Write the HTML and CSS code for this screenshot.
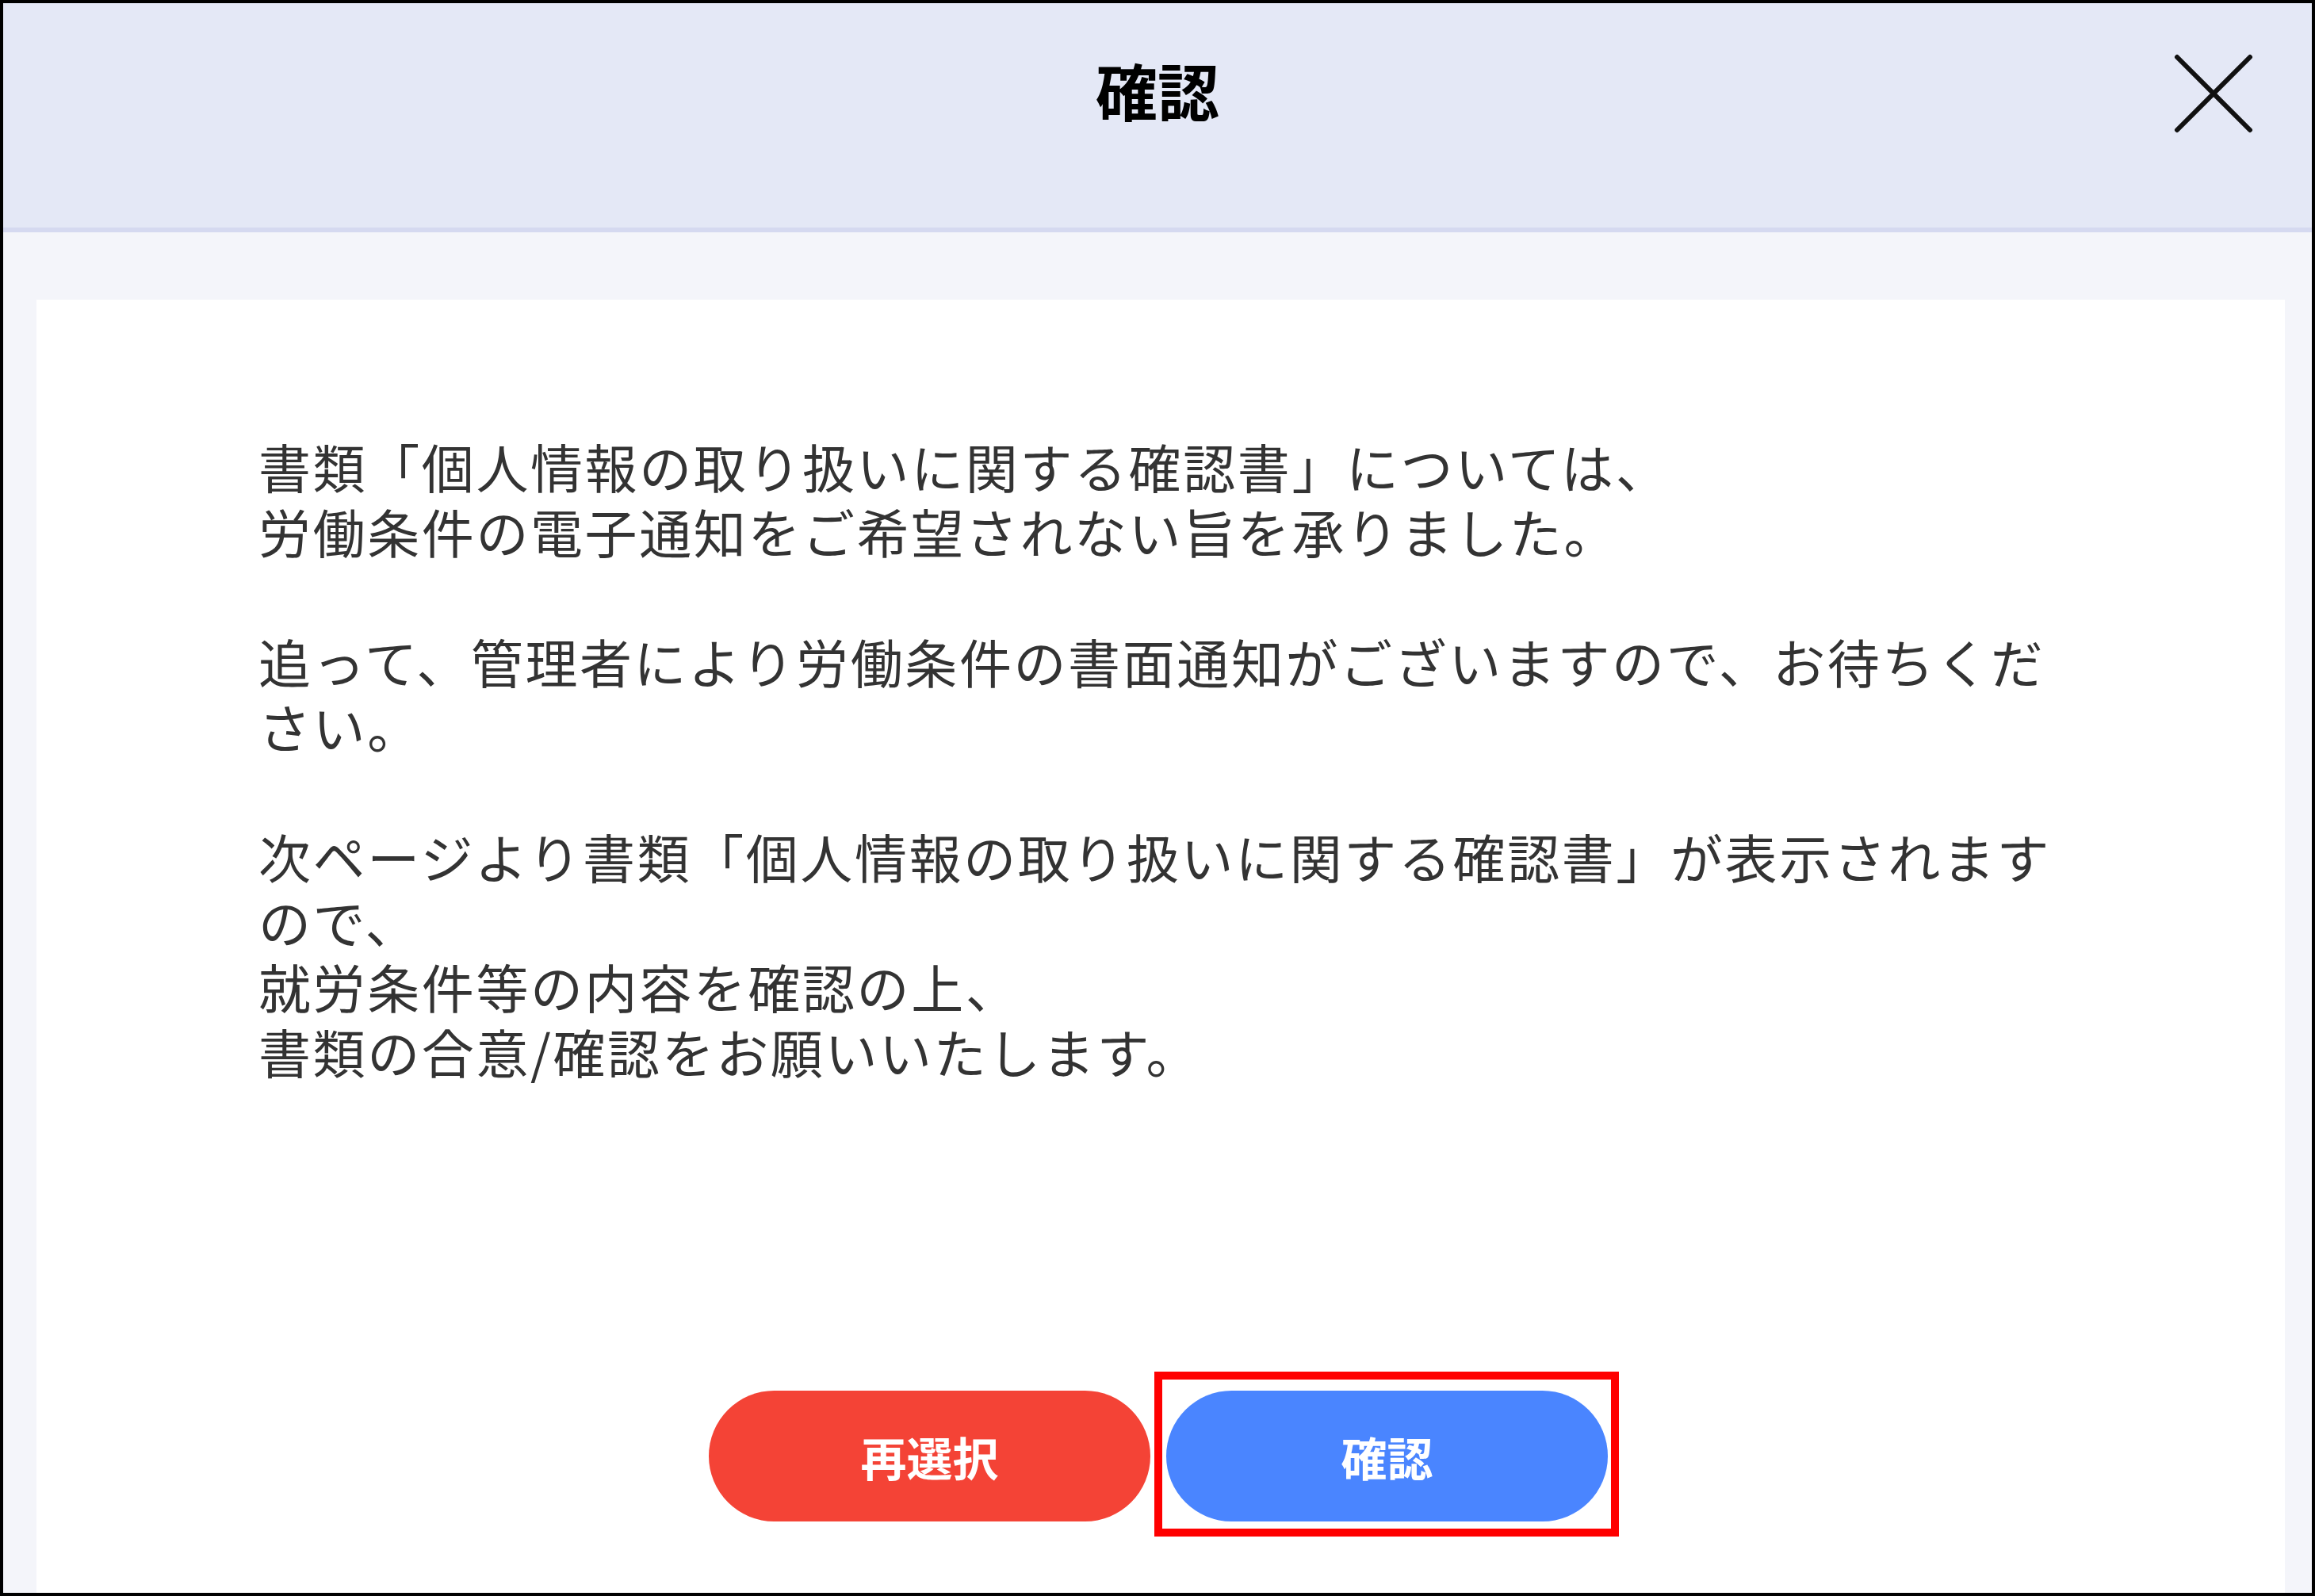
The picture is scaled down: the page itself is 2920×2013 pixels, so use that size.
FILE: index.html
```html
<!DOCTYPE html>
<html lang="ja">

<head>
    <meta charset="UTF-8">
    <meta name="viewport" content="width=device-width, initial-scale=1.0">
    <title>確認</title>
    <link rel="stylesheet" href="styles.css">
</head>

<body>
    <div class="dialog">
        <div class="dialog-header">
            <span></span>
            <h1 class="dialog-title">確認</h1>
            <button class="close-btn" aria-label="閉じる">
                <svg xmlns="http://www.w3.org/2000/svg" width="100" height="100" viewBox="0 0 100 100">
                    <path d="M4 4L96 96M96 4L4 96" stroke="#111" stroke-width="6" stroke-linecap="round" fill="none" />
                </svg>
            </button>
        </div>

        <div class="dialog-body">
            <div class="dialog-panel">
                <div class="message">
                    <p>書類「個人情報の取り扱いに関する確認書」については、<br>労働条件の電子通知をご希望されない旨を承りました。</p>
                    <p>追って、管理者により労働条件の書面通知がございますので、お待ちくだ<br>さい。</p>
                    <p>次ページより書類「個人情報の取り扱いに関する確認書」が表示されます<br>ので、<br>就労条件等の内容を確認の上、<br>書類の合意/確認をお願いいたします。</p>
                </div>

                <div class="actions">
                    <button class="btn btn-red">再選択</button>
                    <div class="btn-wrap">
                        <button class="btn btn-blue">確認</button>
                        <span class="highlight"></span>
                    </div>
                </div>
            </div>
        </div>
    </div>
</body>

</html>
```

FILE: styles.css
```css
* {
    margin: 0;
    padding: 0;
    box-sizing: border-box;
    font-family: "Noto Sans CJK JP", "Noto Sans", sans-serif;
}

body {
    background: #fff;
}

.dialog {
    height: 100vh;
    border: 4px solid #000;
    display: flex;
    flex-direction: column;
}

.dialog-header {
    height: 289px;
    background-color: #e4e8f6;
    border-bottom: 6px solid #d5d9f0;
    display: grid;
    grid-template-columns: 1fr auto 1fr;
    align-items: start;
    padding: 64px 74px 0;
}

.dialog-title {
    font-size: 78px;
    line-height: 78px;
    font-weight: bold;
    color: #000;
    margin-top: 6px;
}

.close-btn {
    justify-self: end;
    background: none;
    border: none;
    width: 100px;
    height: 100px;
    cursor: pointer;
}

.close-btn svg {
    display: block;
}

.dialog-body {
    flex: 1;
    background-color: #f4f5fa;
    padding: 85px 34px 0 42px;
    display: flex;
}

.dialog-panel {
    flex: 1;
    background-color: #fff;
    padding-top: 168px;
}

.message {
    padding-left: 280px;
    color: #333;
    font-size: 66px;
    line-height: 82px;
    letter-spacing: 2.6px;
    white-space: nowrap;
}

.message p {
    margin-bottom: 82px;
}

.message p:last-child {
    margin-bottom: 0;
}

.actions {
    margin-top: 388px;
    display: flex;
    justify-content: center;
    gap: 20px;
    padding-right: 6px;
}

.btn {
    width: 557px;
    height: 165px;
    border: none;
    border-radius: 83px;
    color: #fff;
    font-size: 58px;
    font-weight: bold;
    cursor: pointer;
}

.btn-red {
    background-color: #f44336;
}

.btn-blue {
    background-color: #4a85ff;
}

.btn-wrap {
    position: relative;
}

.btn-wrap .btn {
    display: block;
}

.highlight {
    position: absolute;
    top: -24px;
    left: -15px;
    right: -14px;
    bottom: -19px;
    border: 10px solid #ff0000;
    pointer-events: none;
}
```
